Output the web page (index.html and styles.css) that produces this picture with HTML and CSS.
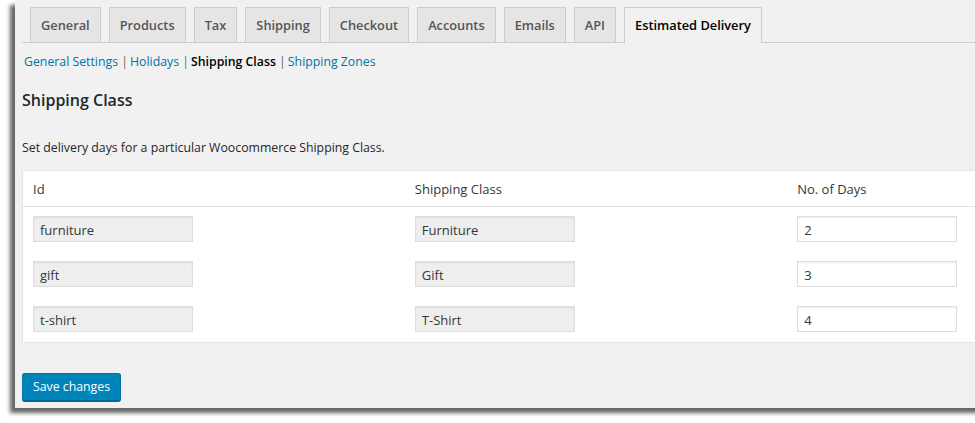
FILE: index.html
```html
<!DOCTYPE html>
<html lang="en">
<head>
    <meta charset="UTF-8">
    <title>Estimated Delivery - Shipping Class</title>
    <link rel="stylesheet" href="styles.css">
</head>
<body>

  <div class="page">
    <div class="wrap">
        <nav class="nav-tab-wrapper">
            <a href="#" class="nav-tab">General</a>
            <a href="#" class="nav-tab">Products</a>
            <a href="#" class="nav-tab">Tax</a>
            <a href="#" class="nav-tab">Shipping</a>
            <a href="#" class="nav-tab">Checkout</a>
            <a href="#" class="nav-tab">Accounts</a>
            <a href="#" class="nav-tab">Emails</a>
            <a href="#" class="nav-tab">API</a>
            <a href="#" class="nav-tab nav-tab-active">Estimated Delivery</a>
        </nav>

        <ul class="subsubsub">
            <li><a href="#">General Settings</a> |</li>
            <li><a href="#">Holidays</a> |</li>
            <li><a href="#" class="current">Shipping Class</a> |</li>
            <li><a href="#">Shipping Zones</a></li>
        </ul>

        <h2>Shipping Class</h2>
        <p class="description">Set delivery days for a particular Woocommerce Shipping Class.</p>

        <table class="class-table">
            <thead>
                <tr>
                    <th>Id</th>
                    <th>Shipping Class</th>
                    <th>No. of Days</th>
                </tr>
            </thead>
            <tbody>
                <tr>
                    <td><input type="text" value="furniture" readonly></td>
                    <td><input type="text" value="Furniture" readonly></td>
                    <td><input type="text" value="2" class="days"></td>
                </tr>
                <tr>
                    <td><input type="text" value="gift" readonly></td>
                    <td><input type="text" value="Gift" readonly></td>
                    <td><input type="text" value="3" class="days"></td>
                </tr>
                <tr>
                    <td><input type="text" value="t-shirt" readonly></td>
                    <td><input type="text" value="T-Shirt" readonly></td>
                    <td><input type="text" value="4" class="days"></td>
                </tr>
            </tbody>
        </table>

        <button class="button-primary">Save changes</button>
    </div>
  </div>

</body>
</html>
```

FILE: styles.css
```css
body {
    margin: 0;
    padding: 0;
    background-color: #fff;
    font-family: "Open Sans", "Noto Sans", sans-serif;
    font-size: 12.3px;
    color: #23282d;
}

.page {
    width: 975px;
    height: 423px;
    overflow: hidden;
}

.wrap {
    margin-left: 15px;
    width: 1200px;
    height: 401px;
    padding: 7px 0 0 7px;
    background-color: #f1f1f1;
    box-shadow: -5px 5px 4px rgba(0, 0, 0, 0.6);
}

.nav-tab-wrapper {
    display: flex;
    height: 35px;
    border-bottom: 1px solid #ccc;
}

.nav-tab {
    margin-left: 8px;
    padding: 0 10px;
    height: 34px;
    line-height: 34px;
    border: 1px solid #ccc;
    border-bottom: none;
    background-color: #e5e5e5;
    color: #555;
    font-size: 12.8px;
    font-weight: 600;
    text-decoration: none;
}

.nav-tab-active {
    background-color: #f1f1f1;
    color: #000;
    height: 35px;
    margin-bottom: -1px;
}

.subsubsub {
    list-style: none;
    margin: 9px 0 0 2px;
    padding: 0;
    display: flex;
    line-height: 20px;
    color: #666;
}

.subsubsub li {
    margin-right: 2px;
}

.subsubsub a {
    color: #0073aa;
    text-decoration: none;
}

.subsubsub a.current {
    color: #000;
    font-weight: 600;
}

h2 {
    margin: 18px 0 0 0;
    font-size: 16px;
    font-weight: 600;
    line-height: 20px;
    color: #23282d;
}

.description {
    margin: 28px 0 0 0;
    line-height: 20px;
    color: #23282d;
}

.class-table {
    margin-top: 12px;
    width: 1148px;
    table-layout: fixed;
    border-collapse: collapse;
    background-color: #fff;
    border: 1px solid #e5e5e5;
    font-size: 13px;
}

.class-table th {
    text-align: left;
    font-weight: 400;
    height: 35px;
    padding: 0 10px;
    border-bottom: 1px solid #e1e1e1;
    color: #32373c;
}

.class-table td {
    padding: 9px 10px 10px 10px;
}

.class-table input {
    box-sizing: border-box;
    display: block;
    width: 160px;
    height: 26px;
    padding: 1px 6px 0 6px;
    margin: 0;
    border: 1px solid #ddd;
    box-shadow: inset 0 1px 2px rgba(0, 0, 0, 0.07);
    background-color: #eee;
    color: #32373c;
    font-family: "Open Sans", "Noto Sans", sans-serif;
    font-size: 13px;
}

.class-table input.days {
    background-color: #fff;
}

.button-primary {
    margin-top: 30px;
    height: 28px;
    padding: 0 10px;
    background-color: #0085ba;
    border: 1px solid #0073aa;
    border-bottom-color: #006799;
    border-radius: 3px;
    box-shadow: 0 1px 0 #006799;
    color: #fff;
    font-family: "Open Sans", "Noto Sans", sans-serif;
    font-size: 12.3px;
    line-height: 26px;
    cursor: pointer;
}
```
